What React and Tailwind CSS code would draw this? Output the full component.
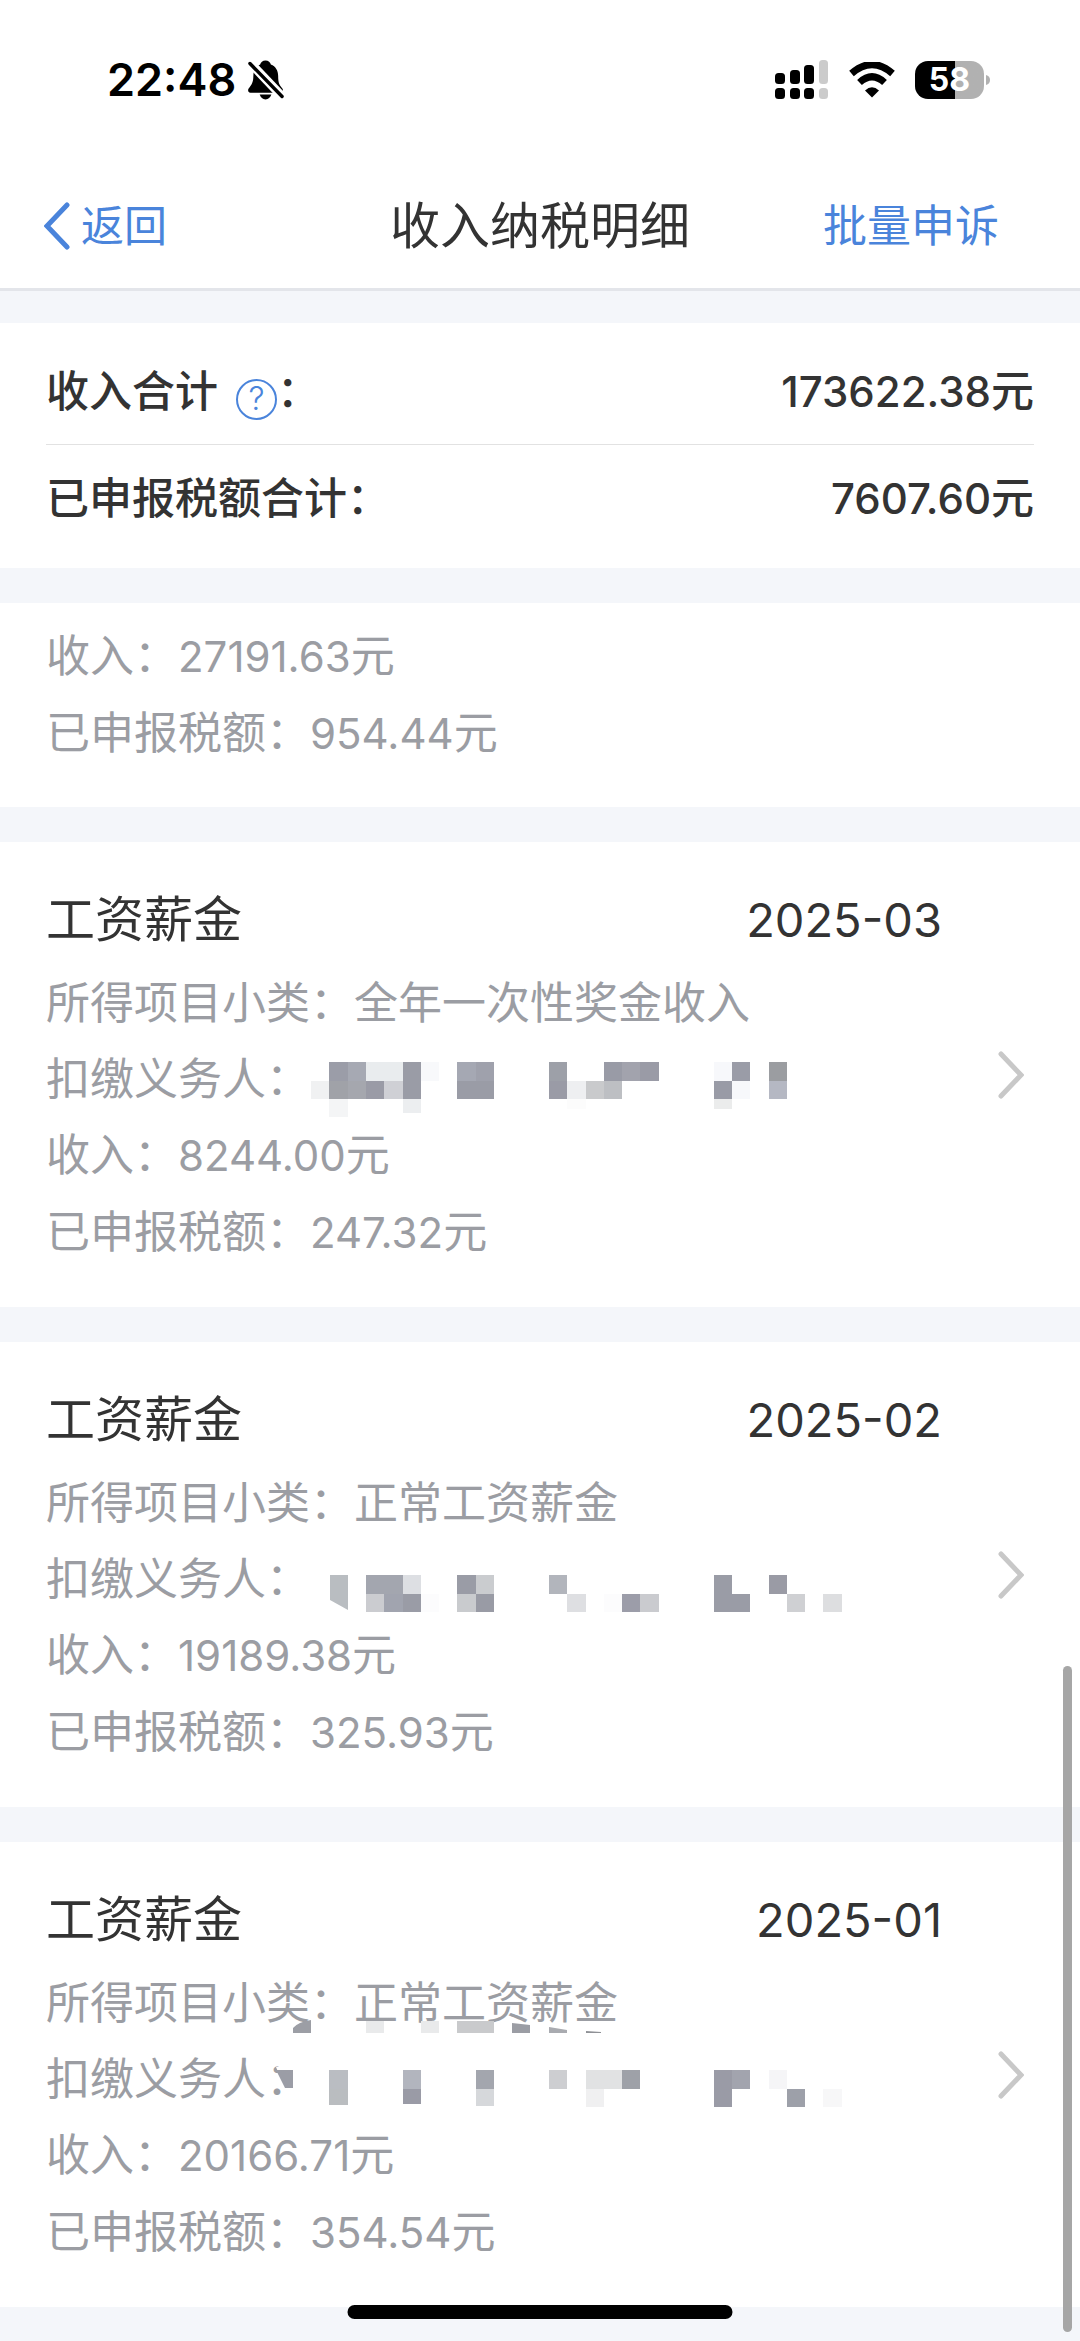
import clsx from "clsx";

const CELL = 18.3;

// [column, row, colour, columns wide, height]
const payerMasks = {
  "2025-03": {
    top: 20,
    cells: [
      [1, 0, "#9b9da8"], [2, 0, "#a6a9b3"], [3, 0, "#e9ecee", 2], [5, 0, "#9a9ca6"], [6, 0, "#f8f9fb"],
      [8, 0, "#a5a8b3"], [9, 0, "#9fa1ac"], [13, 0, "#9da0a8"], [16, 0, "#999ba6"], [17, 0, "#a2a3ad"],
      [18, 0, "#9a9ba6"], [22, 0, "#f7f8fb"], [23, 0, "#9a9ca7"], [25, 0, "#9b9da1"],
      [0, 1, "#f0f1f2"], [1, 1, "#a0a2a8"], [2, 1, "#a5a7ae"], [3, 1, "#9a9ba6"], [4, 1, "#cfd0d5"],
      [5, 1, "#9a9ca6"], [8, 1, "#9a9ca6", 2], [13, 1, "#9a9ba6"], [14, 1, "#eeeff1"], [15, 1, "#c9cacc"],
      [16, 1, "#bdbfc3"], [22, 1, "#999ba6"], [23, 1, "#f7f8fb"], [25, 1, "#b5b8c3"],
      [1, 2, "#f4f5f6", 1, 18], [5, 2, "#eceef0", 1, 14], [14, 2, "#fcfcfc", 1, 10], [22, 2, "#ebecec", 1, 10],
    ],
    shapes: [],
  },
  "2025-02": {
    top: 33,
    cells: [
      [3, 0, "#a3a6af", 2], [5, 0, "#dddfe3"], [8, 0, "#9a9ca6"], [9, 0, "#cacccf"], [13, 0, "#b2b5bc"],
      [22, 0, "#9a9ca6"], [25, 0, "#9a9ba5"],
      [3, 1, "#cbccd0"], [4, 1, "#a1a4af"], [5, 1, "#9a9ca6"], [6, 1, "#fcfcfd"], [8, 1, "#c9cbce"],
      [9, 1, "#999ba5"], [14, 1, "#dedfe2"], [16, 1, "#fcfcfd"], [17, 1, "#9c9da9"], [18, 1, "#cacbcf"],
      [22, 1, "#9a9ca6", 2], [26, 1, "#cfd0d3"], [28, 1, "#dddee0"],
    ],
    shapes: [["M20 33h18v35l-18-10z", "#b9bdc1"]],
  },
  "2025-01": {
    top: 28,
    cells: [
      [1, 0, "#babdc2"], [5, 0, "#b2b5be"], [9, 0, "#a3a6ae"], [13, 0, "#cdced1"], [15, 0, "#e1e2e3", 2],
      [17, 0, "#9ea1a8"], [22, 0, "#9a9ba6"], [23, 0, "#a2a4ae"], [25, 0, "#f5f5f7"],
      [1, 1, "#babdc0", 1, 16], [5, 1, "#9a9ba6", 1, 15], [9, 1, "#d6d8db", 1, 17], [15, 1, "#f0f0f1"],
      [22, 1, "#9a9ba6"], [26, 1, "#9da0a9"], [28, 1, "#f7f7f8"],
    ],
    shapes: [
      ["M-34 25h18v22h-9z", "#ffffff"],
      ["M-34 28h17v18h-8z", "#9b9da6"],
      ["M-17-9v-5q5-6 18-8v13z", "#9c9ea5"],
      ["M56-21h18v12h-18z", "#e9eaeb"],
      ["M111-21h18v12h-18z", "#e9eaeb"],
      ["M147-21h37v12h-37z", "#c9cacc"],
      ["M202-19l18 2v8h-18z", "#9b9da4"],
      ["M239-15l18 3v3h-18z", "#a9abb0"],
      ["M276-11l15 1v1h-15z", "#8f9196"],
    ],
  },
};

const records = [
  { month: "2025-03", kind: "全年一次性奖金收入", income: "8244.00", tax: "247.32" },
  { month: "2025-02", kind: "正常工资薪金", income: "19189.38", tax: "325.93" },
  { month: "2025-01", kind: "正常工资薪金", income: "20166.71", tax: "354.54" },
];

function PayerMask({ month }) {
  const { top, cells, shapes } = payerMasks[month];
  return (
    <svg className="overflow-visible" width="530" height="76" viewBox="0 -1 530 76" shapeRendering="crispEdges" aria-hidden="true">
      {cells.map(([col, row, fill, span = 1, height = 18.5]) => (
        <rect key={`${col}-${row}`} x={1 + col * CELL} y={top + row * 18.5} width={span * CELL} height={height} fill={fill} />
      ))}
      {shapes.map(([d, fill]) => (
        <path key={d} d={d} fill={fill} shapeRendering="auto" />
      ))}
    </svg>
  );
}

function Chevron({ left, className }) {
  return (
    <svg className={clsx("shrink-0", className)} width="26" height="48" viewBox="0 0 26 48" fill="none" stroke="currentColor" strokeWidth="5" strokeLinecap="round" aria-hidden="true">
      <path d={left ? "M23 3L3 24L23 45" : "M3 3L23 24L3 45"} />
    </svg>
  );
}

function Amount({ value }) {
  return (
    <>
      <span className="text-[42px]">{value}</span>元
    </>
  );
}

function StatusBar() {
  return (
    <div className="flex h-[160px] items-center justify-between pr-[89px] pl-[107px] text-black">
      <div className="flex items-center gap-3">
        <span className="text-[45px] leading-[56px] font-semibold">22:48</span>
        <svg width="36" height="40" viewBox="0 0 37 40" aria-label="静音">
          <path d="M18 0c3 0 5 2 5.500 4c5 2 7.500 6 7.500 12c0 7 1 9 4.500 13c1 2 0 4-2 4H2.500c-2 0-3-2-2-4C4 25 5.500 22 5.500 16c0-6 2-10 7-12C13 2 15 0 18 0z" />
          <path d="M12 35h12c-1 3-3 5-6 5s-5-2-6-5z" />
          <path d="M-1-1L38 40" stroke="#fff" strokeWidth="9" />
          <path d="M2 3L35 37" stroke="#000" strokeWidth="3.500" strokeLinecap="round" />
        </svg>
      </div>
      <div className="flex items-center gap-5">
        <svg width="54" height="40" viewBox="0 0 54 40" aria-label="信号">
          <rect x="0" y="13" width="10" height="11" rx="3.500" />
          <rect x="15" y="10" width="10" height="14" rx="3.500" />
          <rect x="29" y="5" width="10" height="19" rx="3.500" />
          <rect x="44" y="0" width="9" height="24" rx="3.500" fill="#cbcbcb" />
          <rect x="0" y="28" width="10" height="11" rx="3.500" />
          <rect x="15" y="28" width="10" height="11" rx="3.500" />
          <rect x="29" y="28" width="10" height="11" rx="3.500" />
          <rect x="44" y="28" width="9" height="11" rx="3.500" fill="#cbcbcb" />
        </svg>
        <svg width="46" height="36" viewBox="0 0 46 36" fill="none" aria-label="无线网络">
          <path d="M2.500 11.500Q23-6.500 43.500 11.500" stroke="#000" strokeWidth="7" />
          <path d="M10.500 20.500Q23 9 35.500 20.500" stroke="#000" strokeWidth="7" />
          <path d="M16 28.500Q23 22 30 28.500L23 35.500z" fill="#000" />
        </svg>
        <div className="flex items-center gap-[2px]">
          <div className="flex h-[38px] w-[69px] items-center justify-center rounded-[13px] bg-linear-to-r from-black from-58% to-[#b1b1b1] to-58% text-[32px] leading-[38px] font-bold text-white">
            58
          </div>
          <svg width="5" height="10" viewBox="0 0 5 10" aria-hidden="true">
            <path d="M0 0q4 1 4 5t-4 5z" fill="#b1b1b1" />
          </svg>
        </div>
      </div>
    </div>
  );
}

function RecordCard({ month, kind, income, tax }) {
  return (
    <li className="flex items-center bg-white pr-[56px] pl-[46px]">
      <div className="flex-1 pt-[33px] pb-9 text-[44px] leading-[76px] text-[#9b9da3]">
        <div className="flex justify-between pr-[56px] leading-[90px] text-[#333333]">
          <h2 className="text-[49px]">工资薪金</h2>
          <time className="text-[47px]" dateTime={month}>
            {month}
          </time>
        </div>
        <p>所得项目小类：{kind}</p>
        <div className="flex">
          <p className="shrink-0">扣缴义务人：</p>
          <PayerMask month={month} />
        </div>
        <p>
          收入：
          <Amount value={income} />
        </p>
        <p>
          已申报税额：
          <Amount value={tax} />
        </p>
      </div>
      <button type="button" className="text-[#c8c8c8]" aria-label="查看详情">
        <Chevron />
      </button>
    </li>
  );
}

function App() {
  return (
    <div className="relative min-h-screen bg-[#f4f6fa] font-['Inter','Noto_Sans_CJK_SC',sans-serif] text-[#333333]">
      <header className="bg-white">
        <StatusBar />
        <nav className="grid h-[131px] grid-cols-[1fr_auto_1fr] items-center border-b-[3px] border-[#e3e5ea] pt-[3px] text-[#4a84db]">
          <button type="button" className="flex items-center gap-[11px] justify-self-start pl-[44px] text-[43px] leading-[64px]">
            <Chevron left />
            返回
          </button>
          <h1 className="text-[50px] leading-[64px] text-[#333333]">收入纳税明细</h1>
          <button type="button" className="justify-self-end pr-[81px] text-[44px] leading-[64px]">
            批量申诉
          </button>
        </nav>
      </header>

      <main className="flex flex-col gap-[35px] pt-8 pb-[34px]">
        <dl className="bg-white px-[46px] pt-[15px] pb-[16px] text-[43px] font-medium">
          <div className="flex h-[107px] items-center justify-between border-b border-[#e2e2e2]">
            <dt className="flex items-center">
              收入合计
              <button type="button" className="mt-4 ml-[18px] flex size-[41px] items-center justify-center rounded-full border-2 border-[#4a84db] text-[32px] leading-[36px] font-light text-[#4a84db]" aria-label="收入合计说明">
                ?
              </button>
              ：
            </dt>
            <dd>
              <Amount value="173622.38" />
            </dd>
          </div>
          <div className="flex h-[107px] items-center justify-between">
            <dt>已申报税额合计：</dt>
            <dd>
              <Amount value="7607.60" />
            </dd>
          </div>
        </dl>

        <ul className="flex flex-col gap-[35px]">
          <li className="bg-white px-[46px] pt-[15px] pb-[35px] text-[44px] leading-[76px] text-[#9b9da3]">
            <p>
              收入：
              <Amount value="27191.63" />
            </p>
            <p>
              已申报税额：
              <Amount value="954.44" />
            </p>
          </li>
          {records.map((record) => (
            <RecordCard key={record.month} {...record} />
          ))}
        </ul>
      </main>

      <div className="absolute right-2 bottom-[9px] h-[666px] w-[9px] rounded-full bg-[#a6a6a6]" />
      <div className="absolute bottom-[22px] left-1/2 h-[14px] w-[385px] -translate-x-1/2 rounded-full bg-black" />
    </div>
  );
}

export default App;
